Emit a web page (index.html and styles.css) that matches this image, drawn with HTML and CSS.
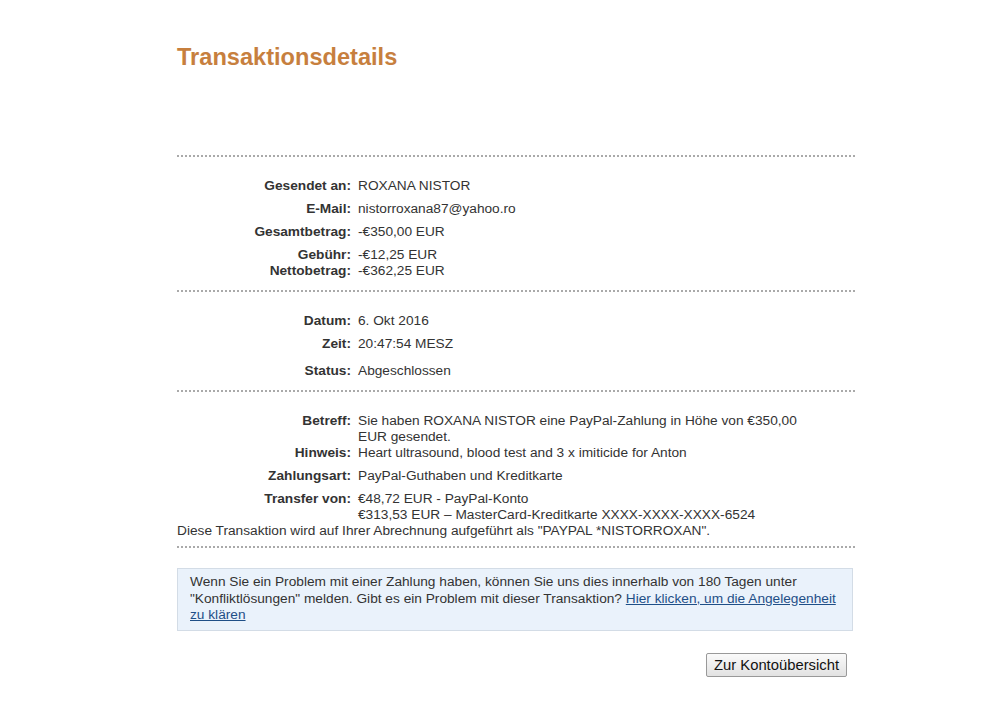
FILE: index.html
```html
<!DOCTYPE html>
<html lang="de">
<head>
    <meta charset="UTF-8">
    <title>Transaktionsdetails</title>
    <link rel="stylesheet" href="styles.css">
</head>
<body>

    <div class="page">
        <h1>Transaktionsdetails</h1>

        <div class="section first">
            <div class="row"><span class="label">Gesendet an:</span><span class="value">ROXANA NISTOR</span></div>
            <div class="row"><span class="label">E-Mail:</span><span class="value">nistorroxana87@yahoo.ro</span></div>
            <div class="row"><span class="label">Gesamtbetrag:</span><span class="value">-€350,00 EUR</span></div>
            <div class="row"><span class="label">Gebühr:</span><span class="value">-€12,25 EUR</span></div>
            <div class="row tight"><span class="label">Nettobetrag:</span><span class="value">-€362,25 EUR</span></div>
        </div>

        <div class="section">
            <div class="row"><span class="label">Datum:</span><span class="value">6. Okt 2016</span></div>
            <div class="row"><span class="label">Zeit:</span><span class="value">20:47:54 MESZ</span></div>
            <div class="row wide"><span class="label">Status:</span><span class="value">Abgeschlossen</span></div>
        </div>

        <div class="section last">
            <div class="row"><span class="label">Betreff:</span><span class="value">Sie haben ROXANA NISTOR eine PayPal-Zahlung in Höhe von €350,00 EUR gesendet.</span></div>
            <div class="row tight"><span class="label">Hinweis:</span><span class="value">Heart ultrasound, blood test and 3 x imiticide for Anton</span></div>
            <div class="row"><span class="label">Zahlungsart:</span><span class="value">PayPal-Guthaben und Kreditkarte</span></div>
            <div class="row"><span class="label">Transfer von:</span><span class="value">€48,72 EUR - PayPal-Konto<br>€313,53 EUR – MasterCard-Kreditkarte XXXX-XXXX-XXXX-6524</span></div>
            <p class="note">Diese Transaktion wird auf Ihrer Abrechnung aufgeführt als "PAYPAL *NISTORROXAN".</p>
        </div>

        <div class="info">
            Wenn Sie ein Problem mit einer Zahlung haben, können Sie uns dies innerhalb von 180 Tagen unter "Konfliktlösungen" melden. Gibt es ein Problem mit dieser Transaktion? <a href="#">Hier klicken, um die Angelegenheit zu klären</a>
        </div>

        <div class="actions">
            <button>Zur Kontoübersicht</button>
        </div>
    </div>

</body>
</html>
```

FILE: styles.css
```css
body {
    margin: 0;
    background-color: #fff;
    color: #333;
    font-family: 'Liberation Sans', Arial, sans-serif;
    font-size: 13.7px;
}

.page {
    width: 678px;
    margin-left: 177px;
}

h1 {
    margin: 44px 0 0;
    height: 111px;
    font-size: 23.6px;
    line-height: 27px;
    color: #c77f3e;
}

.section {
    border-top: 2px dotted #aaa;
    padding: 21px 0 11px;
}

.section.last {
    padding-bottom: 7px;
    border-bottom: 2px dotted #aaa;
}

.row {
    display: flex;
    line-height: 16px;
    margin-top: 7px;
}

.row:first-child,
.row.tight {
    margin-top: 0;
}

.row.wide {
    margin-top: 11px;
}

.label {
    width: 174px;
    text-align: right;
    font-weight: bold;
    flex-shrink: 0;
}

.value {
    margin-left: 7px;
    max-width: 455px;
}

.note {
    margin: 0;
    line-height: 16px;
}

.info {
    margin-top: 20px;
    padding: 5px 12px 6px;
    background-color: #eaf2fb;
    border: 1px solid #d3dce6;
    line-height: 16.5px;
    width: 650px;
}

.info a {
    color: #1f4f87;
}

.actions {
    display: flex;
    justify-content: flex-end;
    margin-top: 22px;
    padding-right: 8px;
}

button {
    height: 24px;
    padding: 0 7px;
    font-family: 'Liberation Sans', Arial, sans-serif;
    font-size: 14.8px;
    color: #111;
    background: linear-gradient(#fafafa, #e2e2e2);
    border: 1px solid #999;
    border-radius: 2px;
}
```
